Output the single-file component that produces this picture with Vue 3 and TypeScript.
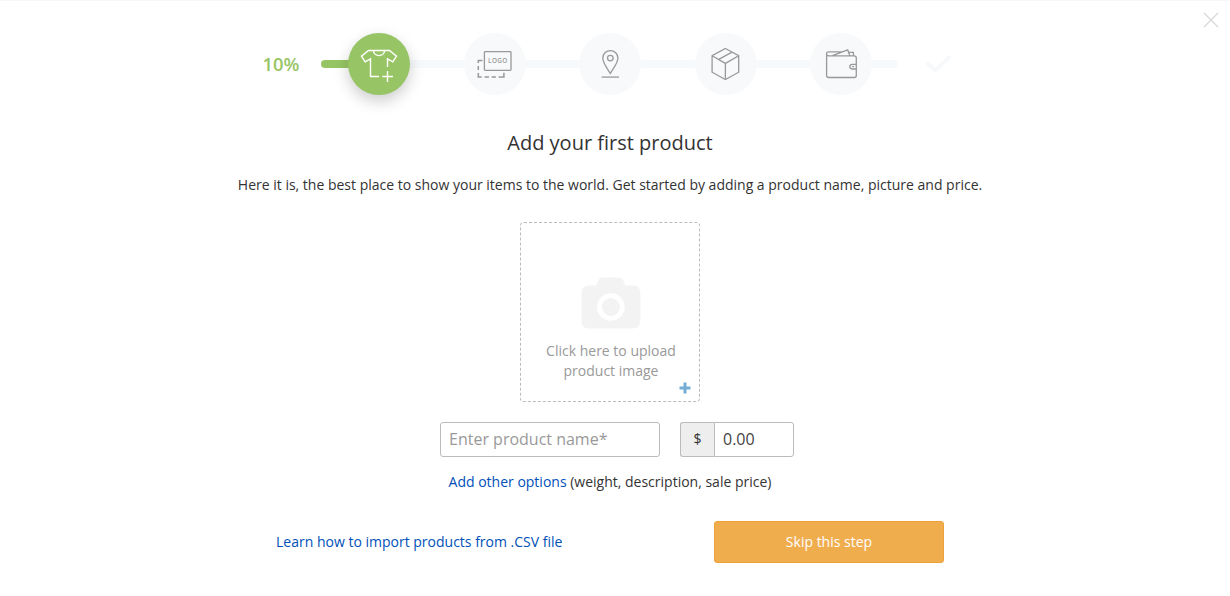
<script setup lang="ts">
import { ref } from 'vue'

type StepId = 'product' | 'logo' | 'location' | 'shipping' | 'payment'

const steps: StepId[] = ['product', 'logo', 'location', 'shipping', 'payment']
const current: StepId = 'product'
const progress = 10
const productName = ref('')
const price = ref('0.00')
</script>

<template>
  <main class="wizard">
    <button class="close" type="button" aria-label="Close">
      <svg width="16" height="16" viewBox="0 0 16 16"><path d="M1 1 15 15M15 1 1 15" /></svg>
    </button>

    <header class="progress">
      <span class="percent">{{ progress }}%</span>
      <div class="track">
        <div class="track-fill" :style="{ width: progress + '%' }"></div>
        <ol class="steps">
          <li v-for="step in steps" :key="step" class="step" :class="{ active: step === current }">
            <svg class="icon" width="62" height="62" viewBox="0 0 62 62">
              <g v-if="step === 'product'">
                <path d="M22.5 43.5V25.9L17.2 28.9 13.5 23.2 20.5 17.5H41.5L48.5 23.2 44.8 28.9 39.5 25.9V34" />
                <path d="M25.5 17.5C25.5 24.3 36.5 24.3 36.5 17.5M22 43.5H31M34.3 43.5H45M39.5 38V49" />
              </g>
              <g v-else-if="step === 'logo'">
                <rect x="20.4" y="18.7" width="26.6" height="18.6" rx=".8" />
                <path class="dashes" d="M18.4 27.4H14.3V30M14.3 33V37M14.3 40V44H17.7M20.6 44H25M27.6 44H31.9M34.6 44H39.9V39.8" />
                <text x="33.8" y="30.2" text-anchor="middle">LOGO</text>
              </g>
              <g v-else-if="step === 'location'">
                <path d="M31.3 40.5C29 36.3 23.8 30.5 23.8 25.1 23.8 20.8 27 17.6 31.3 17.6S38.9 20.8 38.9 25.1C38.9 30.5 33.6 36.3 31.3 40.5Z" />
                <circle cx="31.3" cy="25.1" r="2.8" />
                <path d="M22.6 44.1H40" />
              </g>
              <g v-else-if="step === 'shipping'">
                <path d="M30.4 15.5 43.7 22.7V39.2L30.4 46.6 17.1 39.2V22.7ZM17.1 22.7 30.4 30.4 43.7 22.7M30.4 30.4V46.6M23.7 26.4 37.1 19.1" />
              </g>
              <g v-else>
                <path d="M16.6 20.8V42.4Q16.6 44.5 18.7 44.5H44.2Q46.3 44.5 46.3 42.4V25Q46.3 22.8 44.2 22.8H18.6Q16.6 22.8 16.6 20.8 16.6 18.9 18.6 18.9H31.5M22.5 22.6 37.7 16.9 39.8 22.5M38.9 19.4H43.4V22.7M46.3 31.3H42.3Q39.8 31.3 39.8 33.6T42.3 36H46.3M42.2 33.6H44" />
              </g>
            </svg>
          </li>
        </ol>
      </div>
      <svg class="done" width="28" height="20" viewBox="0 0 28 20"><path d="M1.5 8.3 10.5 16.3 25.5 2" /></svg>
    </header>

    <h1>Add your first product</h1>
    <p class="intro">
      Here it is, the best place to show your items to the world. Get started by adding a product name, picture and price.
    </p>

    <button class="upload" type="button">
      <svg class="camera" width="60" height="52" viewBox="0 0 60 52">
        <path d="M8 8.6H15.3L17 4Q18.5.6 22 .6H37.5Q41 .6 42.5 4L44.2 8.6H51.5Q59.4 8.6 59.4 16.5V43.7Q59.4 51.4 51.5 51.4H8Q.6 51.4.6 43.7V16.5Q.6 8.6 8 8.6Z" />
        <circle cx="29.9" cy="30" r="11.4" />
      </svg>
      <span>Click here to upload<br />product image</span>
      <svg class="plus" width="12" height="12" viewBox="0 0 12 12"><path d="M6 .5V11.5M.5 6H11.5" /></svg>
    </button>

    <form class="fields" @submit.prevent>
      <input v-model="productName" class="name" type="text" placeholder="Enter product name*" />
      <label class="price">
        <span>$</span>
        <input v-model="price" type="text" />
      </label>
    </form>

    <p class="options"><a href="#">Add other options</a> (weight, description, sale price)</p>

    <footer class="actions">
      <a href="#">Learn how to import products from .CSV file</a>
      <button class="skip" type="button">Skip this step</button>
    </footer>
  </main>
</template>

<style>
body {
  margin: 0;
  background: #fff;
}
</style>

<style scoped>
.wizard {
  position: relative;
  box-sizing: border-box;
  width: 1230px;
  height: 596px;
  padding-top: 32px;
  border-top: 1px solid #f7f7f7;
  overflow: hidden;
  background: #fff;
  color: #333;
  font: 14px/20px "Open Sans", "Noto Sans", sans-serif;
}
button,
input {
  box-sizing: border-box;
  font-family: inherit;
}
button {
  padding: 0;
  cursor: pointer;
}
svg {
  display: block;
  fill: none;
}
a {
  color: #0050b8;
  text-decoration: none;
}
.close {
  position: absolute;
  top: 11px;
  right: 11px;
  border: 0;
  background: none;
}
.close path {
  stroke: #d6d6d6;
  stroke-width: 1.1;
}
.progress {
  display: flex;
  align-items: center;
  height: 62px;
  padding-left: 262.5px;
}
.percent {
  width: 58.5px;
  color: #97c565;
  font-size: 18.4px;
  font-weight: 600;
}
.track {
  display: flex;
  align-items: center;
  width: 577px;
  height: 8px;
  border-radius: 4px;
  background: #f8f9fb;
}
.track-fill {
  flex: none;
  height: 8px;
  margin-right: -57.7px;
  border-radius: 4px;
  background: #97c565;
}
.steps {
  display: flex;
  flex: none;
  gap: 53.5px;
  margin: 0 0 0 27px;
  padding: 0;
  list-style: none;
}
.step {
  width: 62px;
  height: 62px;
  border-radius: 50%;
  background: #f8f9fb;
}
.step.active {
  background: #97c565;
  box-shadow: 0 6px 15px rgba(0, 0, 0, 0.2);
}
.icon {
  stroke: #999;
  stroke-width: 1.3;
}
.active .icon {
  stroke: #fff;
  stroke-width: 1.4;
}
.dashes {
  stroke-width: 1.5;
}
.icon text {
  fill: #999;
  stroke: none;
  font-size: 6.4px;
  font-weight: 600;
  letter-spacing: 0.3px;
}
.done {
  margin-left: 27px;
  stroke: #f7f8f9;
  stroke-width: 3.8;
}
h1 {
  width: 1220px;
  margin: 34px 0 0;
  font-size: 20px;
  line-height: 28px;
  font-weight: 400;
  text-align: center;
}
.intro {
  width: 1220px;
  margin: 18px 0 0;
  text-align: center;
}
.upload {
  position: relative;
  display: flex;
  flex-direction: column;
  align-items: center;
  width: 180px;
  height: 180px;
  margin: 27px 0 0 520px;
  padding: 54px 0 0 2px;
  border: 1px dashed #bbb;
  border-radius: 4px;
  background: #fff;
  color: #999;
  font-size: 14px;
  line-height: 20px;
}
.camera {
  margin-bottom: 12px;
  fill: #f3f3f3;
}
.camera circle {
  stroke: #fff;
  stroke-width: 4.8;
}
.plus {
  position: absolute;
  right: 8px;
  bottom: 7.5px;
  stroke: #74afd3;
  stroke-width: 3;
}
.fields {
  display: flex;
  gap: 20px;
  margin: 20px 0 0 440px;
}
.fields input {
  height: 35px;
  padding: 0 8px 2px;
  border: 1px solid #bbb;
  border-radius: 3px;
  outline: none;
  background: #fff;
  color: #444;
  font-size: 16px;
}
.fields input::placeholder {
  color: #999;
}
.fields .name {
  width: 220px;
}
.price {
  display: flex;
}
.price span {
  box-sizing: border-box;
  width: 34px;
  border: 1px solid #bbb;
  border-right: 0;
  border-radius: 3px 0 0 3px;
  background: #eee;
  line-height: 32px;
  text-align: center;
}
.price input {
  width: 80px;
  border-radius: 0 3px 3px 0;
}
.options {
  width: 1220px;
  margin: 15px 0 0;
  text-align: center;
}
.actions {
  display: flex;
  align-items: center;
  justify-content: space-between;
  width: 668px;
  margin: 29px 0 0 276px;
}
.skip {
  width: 230px;
  height: 42px;
  padding-bottom: 2px;
  border: 1px solid #eda138;
  border-radius: 3px;
  background: #f0ad4e;
  color: #fff;
  font-size: 14px;
}
</style>
